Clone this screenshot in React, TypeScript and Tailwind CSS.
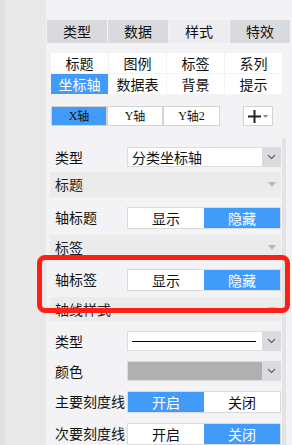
import { ReactNode } from "react";

const FONT = { fontFamily: '"Noto Sans CJK SC", "Noto Sans", sans-serif' };

const TABS = ["类型", "数据", "样式", "特效"];
const SUBTABS = ["标题", "图例", "标签", "系列", "坐标轴", "数据表", "背景", "提示"];

function Chevron() {
  return (
    <svg width="9" height="6" viewBox="0 0 9 6" fill="none">
      <path d="M1 1.2L4.5 4.5L8 1.2" stroke="#555" strokeWidth="1.1" />
    </svg>
  );
}

function Select({ children, fill }: { children?: ReactNode; fill?: boolean }) {
  return (
    <div className="flex h-5 w-[154px] border border-[#dcdcdc] bg-white">
      <div className={"flex flex-1 items-center px-[4px] text-[14px] text-[#111] " + (fill ? "bg-[#b0b0b0]" : "")}>
        {children}
      </div>
      <div className="flex w-[18px] items-center justify-center bg-[#dadbde]">
        <Chevron />
      </div>
    </div>
  );
}

function Toggle({ left, right, on }: { left: string; right: string; on: 0 | 1 }) {
  const seg = (t: string, active: boolean) => (
    <div
      className={
        "flex flex-1 items-center justify-center text-[14px] " +
        (active ? "bg-[#419cf9] text-white" : "bg-white text-[#111]")
      }
    >
      {t}
    </div>
  );
  return (
    <div className="flex h-[22px] w-[154px] border border-[#dadada]">
      {seg(left, on === 0)}
      {seg(right, on === 1)}
    </div>
  );
}

function Row({ label, children }: { label: string; children: ReactNode }) {
  return (
    <div className="flex items-start pt-[10px]">
      <div className="w-[77px] pl-[5px] text-[14px] leading-5 text-[#111]">{label}</div>
      {children}
    </div>
  );
}

function Header({ title, h }: { title: string; h: string }) {
  return (
    <div className={"flex items-center justify-between bg-[#ebebeb] pl-[5px] pr-[5px] text-[14px] text-[#222] " + h}>
      <span>{title}</span>
      <svg width="8" height="5" viewBox="0 0 8 5">
        <path d="M0 0H8L4 5Z" fill="#b8b8b8" />
      </svg>
    </div>
  );
}

export default function App() {
  return (
    <div style={FONT} className="relative flex h-[445px] w-[292px] overflow-hidden bg-[#f3f3f5]">
      {/* left gutter */}
      <div className="w-[5px] bg-[#e1e1e1]" />
      <div className="w-[41px] bg-[#e9e9e9]" />

      <div className="flex flex-1 flex-col">
        {/* main tabs */}
        <div className="ml-px mt-5 grid h-[25px] w-[243px] grid-cols-4 gap-px">
          {TABS.map((t, i) => (
            <div
              key={t}
              className={
                "flex items-center justify-center text-[14px] text-[#111] " +
                (i === 2 ? "bg-[#ededf0]" : "bg-[#d9dadd]")
              }
            >
              {t}
            </div>
          ))}
        </div>

        {/* sub tabs */}
        <div className="ml-[5px] mt-[10px] grid w-[231px] grid-cols-4 gap-px">
          {SUBTABS.map((t, i) => (
            <div
              key={t}
              className={
                "flex h-5 items-center justify-center text-[14px] " +
                (i === 4 ? "bg-[#419cf9] text-white" : "bg-white text-[#111]")
              }
            >
              {t}
            </div>
          ))}
        </div>

        {/* axis selector */}
        <div className="ml-[5px] mt-3 flex h-5 items-stretch">
          <div className="flex w-[56px] items-center justify-center border border-[#d3d3d3] bg-[#419cf9] text-[12px] text-[#111]">
            <span style={{ fontFamily: '"Liberation Serif", serif' }}>X</span>轴
          </div>
          <div className="flex w-[56px] items-center justify-center border border-[#d3d3d3] bg-white text-[12px] text-[#111]">
            <span style={{ fontFamily: '"Liberation Serif", serif' }}>Y</span>轴
          </div>
          <div className="flex w-[57px] items-center justify-center border border-[#d3d3d3] bg-white text-[12px] text-[#111]">
            <span style={{ fontFamily: '"Liberation Serif", serif' }}>Y</span>轴
            <span style={{ fontFamily: '"Liberation Serif", serif' }}>2</span>
          </div>
          <div className="ml-[23px] flex w-[30px] items-center justify-center gap-[2px] border border-[#d3d3d3] bg-white">
            <svg width="13" height="13" viewBox="0 0 13 13">
              <path d="M6.5 0V13M0 6.5H13" stroke="#222" strokeWidth="2" />
            </svg>
            <svg width="5" height="3" viewBox="0 0 5 3">
              <path d="M0 0H5L2.5 3Z" fill="#888" />
            </svg>
          </div>
        </div>

        {/* settings list */}
        <div className="mt-3 flex flex-1">
          <div className="ml-[4px] w-[231px]">
            <div className="flex items-start pb-[5px] pt-[9px]">
              <div className="w-[77px] pl-[5px] text-[14px] leading-5 text-[#111]">类型</div>
              <Select>分类坐标轴</Select>
            </div>
            <Header title="标题" h="h-[25px]" />
            <div className="pb-[6px]">
              <Row label="轴标题">
                <Toggle left="显示" right="隐藏" on={1} />
              </Row>
            </div>
            <Header title="标签" h="h-6" />
            <div className="pb-[6px]">
              <Row label="轴标签">
                <Toggle left="显示" right="隐藏" on={1} />
              </Row>
            </div>
            <Header title="轴线样式" h="h-6" />
            <Row label="类型">
              <Select>
                <div className="h-px w-[124px] bg-black" />
              </Select>
            </Row>
            <Row label="颜色">
              <Select fill />
            </Row>
            <Row label="主要刻度线">
              <Toggle left="开启" right="关闭" on={0} />
            </Row>
            <Row label="次要刻度线">
              <Toggle left="开启" right="关闭" on={1} />
            </Row>
          </div>
          <div className="ml-px w-[4px] rounded-t-full bg-[#e3e3e5]" />
        </div>
      </div>

      {/* highlight annotation */}
      <div className="absolute left-[37px] top-[255px] h-[58px] w-[253px] rounded-[8px] border-[5px] border-[#ff2015]" />
    </div>
  );
}
